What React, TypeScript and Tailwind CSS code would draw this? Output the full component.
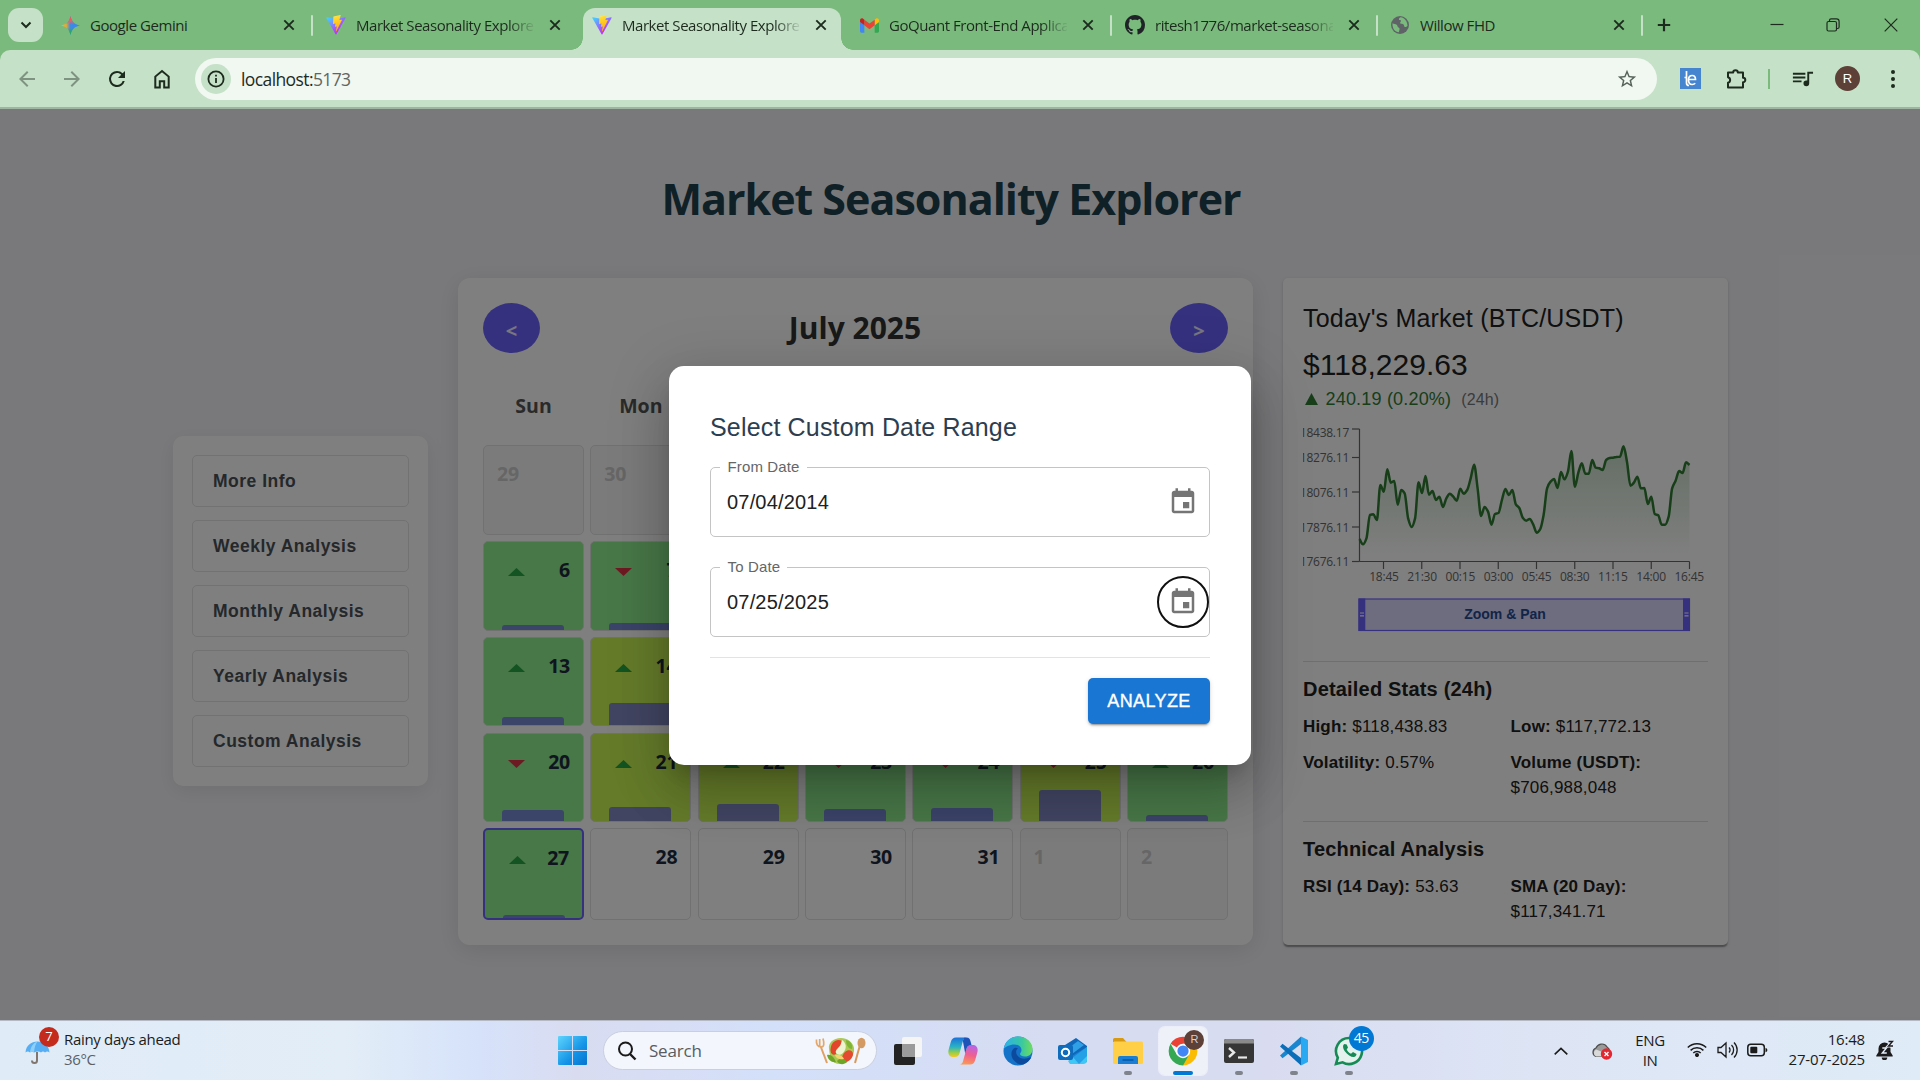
import React from "react";

const SEGOE = "font-['Open_Sans',sans-serif]";
const ARIAL = "font-['Liberation_Sans',Arial,sans-serif]";

/* ---------- small icons ---------- */

function ViteIcon() {
  return (
    <svg viewBox="0 0 32 32" className="h-5 w-5 shrink-0">
      <defs>
        <linearGradient id="va" x1="0" y1="0.1" x2="0.6" y2="0.8">
          <stop offset="0" stopColor="#41d1ff" />
          <stop offset="1" stopColor="#bd34fe" />
        </linearGradient>
        <linearGradient id="vb" x1="0.4" y1="0" x2="0.6" y2="1">
          <stop offset="0" stopColor="#ffea83" />
          <stop offset="0.1" stopColor="#ffdd35" />
          <stop offset="1" stopColor="#ffa800" />
        </linearGradient>
      </defs>
      <path d="M31.3 4.8 16.7 30.9a.8.8 0 0 1-1.4 0L.5 4.8a.8.8 0 0 1 .9-1.2l14.6 2.6 14.5-2.6a.8.8 0 0 1 .8 1.2z" fill="url(#va)" />
      <path d="M23 .1 12.200 2.2a.4.4 0 0 0-.3.4l-.7 11.200a.4.4 0 0 0 .5.4l3-.7a.4.4 0 0 1 .5.5l-.9 4.400a.4.4 0 0 0 .5.5l1.900-.6a.4.4 0 0 1 .5.5l-1.400 6.900c-.1.400.5.700.7.300l.2-.2 8.800-17.600a.4.4 0 0 0-.4-.6l-3.100.6a.4.4 0 0 1-.5-.5L23.500.600A.4.4 0 0 0 23 .1z" fill="url(#vb)" />
    </svg>
  );
}

const SPARK = "M10 0c.9 5.500 4.200 9 10 10-5.800 1-9.100 4.500-10 10-.9-5.500-4.200-9-10-10 5.800-1 9.100-4.500 10-10z";

function GeminiIcon() {
  return (
    <svg viewBox="0 0 20 20" className="h-[19px] w-[19px] shrink-0">
      <defs>
        <linearGradient id="ga" x1="0" y1="0.5" x2="1" y2="0.5">
          <stop offset="0" stopColor="#f7b81d" />
          <stop offset="0.28" stopColor="#e3a83a" />
          <stop offset="0.48" stopColor="#3f8be0" />
          <stop offset="1" stopColor="#3186ff" />
        </linearGradient>
        <linearGradient id="gb" x1="0.5" y1="0" x2="0.5" y2="1">
          <stop offset="0" stopColor="#ef4e5e" />
          <stop offset="0.25" stopColor="#e8606a" />
          <stop offset="0.45" stopColor="#e8606a" stopOpacity="0" />
          <stop offset="0.62" stopColor="#2aa765" stopOpacity="0" />
          <stop offset="0.85" stopColor="#2aa765" />
          <stop offset="1" stopColor="#2aa765" />
        </linearGradient>
      </defs>
      <path d={SPARK} fill="url(#ga)" />
      <path d={SPARK} fill="url(#gb)" />
    </svg>
  );
}

function GmailIcon() {
  return (
    <svg viewBox="52 42 88 66" className="h-[15px] w-[19px] shrink-0">
      <path fill="#4285f4" d="M58 108h14V74L52 59v43c0 3.320 2.690 6 6 6" />
      <path fill="#34a853" d="M120 108h14c3.320 0 6-2.690 6-6V59l-20 15" />
      <path fill="#fbbc04" d="M120 48v26l20-15v-8c0-7.420-8.470-11.650-14.400-7.200" />
      <path fill="#ea4335" d="M72 74V48l24 18 24-18v26L96 92" />
      <path fill="#c5221f" d="M52 51v8l20 15V48l-5.600-4.200c-5.940-4.450-14.400-.22-14.400 7.200" />
    </svg>
  );
}

function GithubIcon() {
  return (
    <svg viewBox="0 0 16 16" className="h-5 w-5 shrink-0" fill="#1f2328">
      <path d="M8 0C3.580 0 0 3.580 0 8c0 3.540 2.290 6.530 5.470 7.590.4.07.55-.17.55-.38 0-.19-.01-.82-.01-1.490-2.010.37-2.530-.49-2.690-.94-.09-.23-.48-.94-.82-1.130-.28-.15-.68-.52-.01-.53.63-.01 1.080.58 1.230.82.72 1.210 1.870.87 2.330.66.07-.52.28-.87.51-1.070-1.780-.2-3.640-.89-3.640-3.950 0-.87.31-1.590.82-2.150-.08-.2-.36-1.020.08-2.120 0 0 .67-.21 2.200.82.64-.18 1.320-.27 2-.27s1.360.09 2 .27c1.530-1.040 2.200-.82 2.200-.82.44 1.100.16 1.920.08 2.120.51.56.82 1.270.82 2.150 0 3.070-1.870 3.750-3.650 3.950.29.25.54.73.54 1.480 0 1.070-.01 1.930-.01 2.200 0 .21.15.46.55.38A8.010 8.010 0 0 0 16 8c0-4.420-3.580-8-8-8z" />
    </svg>
  );
}

function GlobeIcon() {
  return (
    <svg viewBox="0 0 20 20" className="h-5 w-5 shrink-0">
      <circle cx="10" cy="10" r="9" fill="#5f6368" />
      <path d="M2.500 8.200c1.500.8 3 .6 4.200 1.600 1 .8.600 2.200 1.800 2.700 1.200.4 1.200 1.600.9 2.600-.2.900-.6 1.600-.3 2.200C5 17 2.200 13.500 2.500 8.200zM10.500 2.200c-1 .8-1.800 1.400-1.500 2.300.3.800 1.800.3 2 1.300.2.900-1.300 1.400-.8 2.400.6 1.100 2.600.3 3.400 1.300.8 1 .3 2 1.200 2.400.9.400 1.900-.3 2.700-1.200C17.300 6 14.500 2.600 10.500 2.200z" fill="#7aba7d" />
    </svg>
  );
}

function CloseX() {
  return (
    <svg viewBox="0 0 12 12" className="h-3 w-3 shrink-0" stroke="#1d2b1e" strokeWidth="1.900" fill="none">
      <path d="M1.300 1.300 10.700 10.700M10.700 1.300 1.300 10.700" />
    </svg>
  );
}

/* ---------- browser chrome ---------- */

function Tab({ icon, title, fade = false, active = false, pad }: { icon: React.ReactNode; title: string; fade?: boolean; active?: boolean; pad: string }) {
  return (
    <div className={`relative flex shrink-0 items-center ${pad} ${active ? "mt-2 h-[42px] rounded-t-[12px] bg-[#c5e1c7] pb-2" : "h-[50px]"}`}>
      {active && (
        <>
          <span className="absolute bottom-0 -left-3 h-3 w-3 bg-[radial-gradient(circle_at_0_0,transparent_11.500px,#c5e1c7_12px)]" />
          <span className="absolute -right-3 bottom-0 h-3 w-3 bg-[radial-gradient(circle_at_100%_0,transparent_11.500px,#c5e1c7_12px)]" />
        </>
      )}
      <span className="flex w-5 justify-center">{icon}</span>
      <span
        className={`ml-[10px] w-[178px] overflow-hidden text-[15px] leading-5 tracking-[-0.45px] whitespace-nowrap text-[#1d2b1e] ${fade ? "[mask-image:linear-gradient(to_right,#000_152px,transparent_180px)]" : ""}`}
      >
        {title}
      </span>
      <span className="ml-[15px]">
        <CloseX />
      </span>
    </div>
  );
}

function Sep() {
  return <span className="h-[21px] w-[2px] shrink-0 rounded bg-[#c5e1c7]" />;
}

function BrowserChrome() {
  return (
    <header className={`${SEGOE} h-[109px] bg-[#7aba7d]`}>
      <div className="flex h-[50px] items-center">
        <button className="ml-2 flex h-[34px] w-[35px] shrink-0 items-center justify-center rounded-[11px] bg-[#c5e1c7]">
          <svg viewBox="0 0 12 8" className="h-2 w-3" fill="none" stroke="#1d2b1e" strokeWidth="2">
            <path d="M1.500 1.500 6 6l4.500-4.500" />
          </svg>
        </button>
        <Tab icon={<GeminiIcon />} title="Google Gemini" pad="ml-[17px] w-[251px]" />
        <Sep />
        <Tab icon={<ViteIcon />} title="Market Seasonality Explorer" fade pad="pl-[13px] w-[270px]" />
        <Tab icon={<ViteIcon />} title="Market Seasonality Explorer" fade active pad="pl-[9px] w-[258px]" />
        <Tab icon={<GmailIcon />} title="GoQuant Front-End Application" fade pad="pl-[18px] w-[269px]" />
        <Sep />
        <Tab icon={<GithubIcon />} title="ritesh1776/market-seasonality" fade pad="pl-[13px] w-[264px]" />
        <Sep />
        <Tab icon={<GlobeIcon />} title="Willow FHD" pad="pl-[12px] w-[263px]" />
        <Sep />
        <svg viewBox="0 0 14 14" className="ml-[14px] h-[14px] w-[14px]" stroke="#1d2b1e" strokeWidth="2.200">
          <path d="M7 .8v12.400M.8 7h12.400" />
        </svg>
        <div className="ml-auto flex items-center pr-[22px]">
          <svg viewBox="0 0 14 14" className="mr-[42px] h-[14px] w-[14px]" stroke="#1d2b1e" strokeWidth="1.200">
            <path d="M.5 6.500h13" />
          </svg>
          <svg viewBox="0 0 14 14" className="mr-[44px] h-[14px] w-[14px]" stroke="#1d2b1e" strokeWidth="1.200" fill="none">
            <rect x="1" y="3.500" width="9.500" height="9.500" rx="1.500" />
            <path d="M3.500 3V2.200A1.500 1.500 0 0 1 5 .9h5.500A2.600 2.600 0 0 1 13.100 3.500V9a1.500 1.500 0 0 1-1.500 1.500H11" />
          </svg>
          <svg viewBox="0 0 14 14" className="h-[14px] w-[14px]" stroke="#1d2b1e" strokeWidth="1.200">
            <path d="M.7.7l12.600 12.600M13.300.7.7 13.300" />
          </svg>
        </div>
      </div>
      <div className="flex h-[59px] items-center rounded-t-[10px] border-b-2 border-[#9fb4a1] bg-[#c5e1c7]">
        <svg viewBox="0 0 24 24" className="ml-[15px] h-6 w-6" fill="#7f9381">
          <path d="M20 11H7.830l5.590-5.590L12 4l-8 8 8 8 1.410-1.410L7.830 13H20z" />
        </svg>
        <svg viewBox="0 0 24 24" className="ml-[21px] h-6 w-6" fill="#7f9381">
          <path d="m12 4-1.410 1.410L16.170 11H4v2h12.170l-5.580 5.590L12 20l8-8z" />
        </svg>
        <svg viewBox="0 0 24 24" className="ml-[21px] h-6 w-6" fill="#1d2b1e">
          <path d="M17.650 6.350A7.960 7.960 0 0 0 12 4a8 8 0 1 0 7.730 10h-2.080A6 6 0 1 1 12 6c1.660 0 3.140.69 4.220 1.780L13 11h7V4z" />
        </svg>
        <svg viewBox="0 0 24 24" className="ml-[21px] h-6 w-6" fill="none" stroke="#1d2b1e" strokeWidth="2">
          <path d="M5.300 20.500V9.600L12 4l6.700 5.600v10.900h-4.500v-6.300H9.800v6.300z" />
        </svg>
        <div className="ml-[21px] flex h-[42px] w-[1462px] items-center rounded-full bg-[#f1f7f1]">
          <span className="ml-[6px] flex h-[30px] w-[30px] items-center justify-center rounded-full bg-[#c5e1c7]">
            <svg viewBox="0 0 18 18" className="h-[18px] w-[18px]" fill="none" stroke="#1d2b1e" strokeWidth="1.800">
              <circle cx="9" cy="9" r="7.600" />
              <path d="M9 8v5M9 4.800v1.800" />
            </svg>
          </span>
          <span className="mt-px ml-[10px] text-[17.500px] leading-6 tracking-[-0.6px] text-[#1d2b1e]">
            localhost:<span className="text-[#5f6660]">5173</span>
          </span>
          <svg viewBox="0 0 24 24" className="mr-[19px] ml-auto h-[22px] w-[22px]" fill="#56635a">
            <path d="m22 9.240-7.190-.62L12 2 9.190 8.630 2 9.240l5.460 4.730L5.820 21 12 17.270 18.180 21l-1.630-7.030zM12 15.400l-3.760 2.270 1-4.280-3.320-2.880 4.380-.38L12 6.100l1.710 4.040 4.380.38-3.320 2.880 1 4.280z" />
          </svg>
        </div>
        <svg viewBox="0 0 21 21" className="ml-[23px] h-[21px] w-[21px]">
          <rect width="21" height="21" fill="#4584cf" />
          <path d="M6.500 3v12a2.500 2.500 0 0 0 2.500 2.500M6.500 9.500h-2M8.500 11.500h7c0-3-1.500-4-3.300-4-2.200 0-3.700 1.700-3.700 4.500s1.500 4.500 3.700 4.500c1.300 0 2.300-.4 3-1.200" stroke="#fff" strokeWidth="1.700" fill="none" />
        </svg>
        <svg viewBox="0 0 24 24" className="ml-[23px] h-6 w-6" fill="none" stroke="#1d2b1e" strokeWidth="2">
          <path d="M4 5.500h5.200a2.300 2.300 0 0 1 4.600 0H19v5.200a2.300 2.300 0 0 1 0 4.600v5.200H4v-4.700a2.900 2.900 0 0 0 0-5.600z" strokeLinejoin="round" />
        </svg>
        <span className="ml-[20px] h-5 w-[2px] bg-[#7aba7d]" />
        <svg viewBox="0 0 24 24" className="ml-[21px] h-[23px] w-[23px]" fill="#1d2b1e">
          <path d="M15 6H2v2h13zm0 4H2v2h13zM2 16h9v-2H2zM17 5v9.180c-.31-.11-.65-.18-1-.18a3 3 0 1 0 3 3V7h4V5z" />
        </svg>
        <span className={`${ARIAL} ml-[21px] flex h-[25px] w-[25px] items-center justify-center rounded-full bg-[#5d4037] text-[13px] text-white`}>R</span>
        <svg viewBox="0 0 6 20" className="ml-[30px] h-5 w-[6px]" fill="#1d2b1e">
          <circle cx="3" cy="3" r="2" />
          <circle cx="3" cy="10" r="2" />
          <circle cx="3" cy="17" r="2" />
        </svg>
      </div>
    </header>
  );
}

/* ---------- analysis sidebar ---------- */

function Sidebar() {
  const items = ["More Info", "Weekly Analysis", "Monthly Analysis", "Yearly Analysis", "Custom Analysis"];
  return (
    <aside className={`${ARIAL} mb-[2px] flex h-[350px] w-[255px] flex-col gap-[13px] rounded-[10px] bg-white px-[19px] pt-[19px] shadow-[0_5px_19px_rgba(0,0,0,0.08)]`}>
      {items.map((t) => (
        <button key={t} className="h-[52px] rounded-[5px] border border-[#e4e4e4] pl-5 text-left text-[17.500px] leading-[22px] font-bold tracking-[0.5px] text-[#4a5056]">
          {t}
        </button>
      ))}
    </aside>
  );
}

/* ---------- calendar ---------- */

type Day = { n: number; off?: boolean; dir?: "up" | "down"; tone?: "g" | "l"; bar?: number; today?: boolean };

const up = (n: number, tone: "g" | "l", bar: number, today = false): Day => ({ n, dir: "up", tone, bar, today });
const down = (n: number, tone: "g" | "l", bar: number): Day => ({ n, dir: "down", tone, bar });

const DAYS: Day[] = [
  { n: 29, off: true }, { n: 30, off: true }, up(1, "g", 9), up(2, "g", 12), up(3, "g", 10), down(4, "g", 8), up(5, "g", 5),
  up(6, "g", 5), down(7, "g", 7), up(8, "g", 8), up(9, "l", 14), up(10, "l", 20), up(11, "l", 24), down(12, "g", 8),
  up(13, "g", 8), up(14, "l", 22), down(15, "l", 20), up(16, "l", 16), up(17, "g", 14), down(18, "l", 18), down(19, "g", 7),
  down(20, "g", 11), up(21, "l", 14), up(22, "l", 17), down(23, "g", 12), down(24, "g", 13), down(25, "l", 31), up(26, "g", 6),
  up(27, "g", 3, true), { n: 28 }, { n: 29 }, { n: 30 }, { n: 31 }, { n: 1, off: true }, { n: 2, off: true },
];

function DayCell({ d }: { d: Day }) {
  const bg = d.tone === "g" ? "bg-[#90ee90]" : d.tone === "l" ? "bg-[#cbf755]" : d.off ? "bg-[#f7f7f7]" : "bg-white";
  const border = d.today ? "border-2 border-[#6c63ff]" : "border border-[#e2e2e2]";
  return (
    <div className={`relative flex items-start overflow-hidden rounded-[5px] px-[13px] pt-[14px] text-[19.500px] leading-[28px] font-bold tracking-[-0.2px] ${bg} ${border} ${d.off ? "text-[#cccccc]" : "justify-between text-[#1d2b3c]"}`}>
      {!d.off && (
        <svg viewBox="0 0 17 8" className={`mt-[12px] ml-[11px] h-2 w-[17px] ${d.dir ? "" : "invisible"}`} fill={d.dir === "down" ? "#dc3545" : "#28a745"}>
          <path d={d.dir === "down" ? "M0 0h17L8.500 8z" : "M0 8h17L8.500 0z"} />
        </svg>
      )}
      <span>{d.n}</span>
      {d.bar && <span className="absolute bottom-0 left-[18px] w-[62px] rounded-t-[3px] bg-[#6f6be4]/78" style={{ height: d.bar }} />}
    </div>
  );
}

function Calendar() {
  const names = ["Sun", "Mon", "Tue", "Wed", "Thu", "Fri", "Sat"];
  return (
    <section className={`${SEGOE} h-[667px] w-[795px] rounded-[12px] bg-white p-[25px] shadow-[0_5px_25px_rgba(0,0,0,0.1)]`}>
      <div className="flex h-[50px] items-center justify-between">
        <button className="h-[50px] w-[57px] rounded-[50%] bg-[#6c63ff] pt-[5px] text-[20px] leading-6 font-bold text-white/90">&lt;</button>
        <h2 className="text-[30px] leading-10 font-bold text-[#333333]">July 2025</h2>
        <button className="h-[50px] w-[58px] rounded-[50%] bg-[#6c63ff] pt-[5px] text-[20px] leading-6 font-bold text-white/90">&gt;</button>
      </div>
      <div className="mt-[37px] grid grid-cols-7 gap-x-[6.250px] text-center text-[19.500px] leading-[32px] font-bold text-[#555555]">
        {names.map((n) => (
          <span key={n}>{n}</span>
        ))}
      </div>
      <div className="mt-[22.750px] grid grid-cols-7 grid-rows-[90px_89.500px_89.500px_89.500px_92px] gap-[6.250px]">
        {DAYS.map((d, i) => (
          <DayCell key={i} d={d} />
        ))}
      </div>
    </section>
  );
}

/* ---------- price chart ---------- */

const SERIES = [
  807, 823, 805, 735, 733, 750, 645, 665, 598, 638, 633, 704, 660, 670, 745, 771, 745, 637, 669, 618, 674, 663, 690, 680, 711, 685, 671, 680, 692, 656, 671,
  660, 625, 584, 655, 738, 711, 725, 764, 732, 729, 690, 657, 675, 660, 703, 714, 743, 752, 747, 763, 788, 778, 735, 655, 635, 627, 654, 606, 628, 605, 543,
  650, 608, 580, 611, 611, 570, 593, 595, 600, 570, 564, 563, 561, 560, 529, 575, 647, 638, 620, 655, 654, 702, 680, 732, 736, 764, 764, 740, 655, 632, 603,
  609, 577, 585,
];

const X0 = 56.500;
const X1 = 386.500;

function monotonePath(ys: number[]): string {
  const n = ys.length;
  const dx = (X1 - X0) / (n - 1);
  const s = ys.slice(1).map((y, i) => (y - ys[i]) / dx);
  const m = ys.map((_, i) => {
    if (i === 0) return s[0];
    if (i === n - 1) return s[n - 2];
    if (s[i - 1] * s[i] <= 0) return 0;
    return (2 * s[i - 1] * s[i]) / (s[i - 1] + s[i]);
  });
  let d = `M${X0} ${ys[0].toFixed(2)}`;
  for (let i = 1; i < n; i++) {
    const xa = X0 + (i - 1) * dx;
    const xb = X0 + i * dx;
    d += `C${(xa + dx / 3).toFixed(2)} ${(ys[i - 1] + (m[i - 1] * dx) / 3).toFixed(2)} ${(xb - dx / 3).toFixed(2)} ${(ys[i] - (m[i] * dx) / 3).toFixed(2)} ${xb.toFixed(2)} ${ys[i].toFixed(2)}`;
  }
  return d;
}

function PriceChart() {
  const line = monotonePath(SERIES.map((v) => v / 3 - 142));
  const yTicks: [number, string, number][] = [
    [17, "118438.17", 25], [45.500, "118276.11", 50], [80, "118076.11", 84.500], [115, "117876.11", 119.500], [149.500, "117676.11", 154],
  ];
  const xTicks = ["18:45", "21:30", "00:15", "03:00", "05:45", "08:30", "11:15", "14:00", "16:45"];
  return (
    <svg viewBox="0 0 405 249" className="block h-[249px] w-[405px]">
      <defs>
        <linearGradient id="fill" gradientUnits="userSpaceOnUse" x1="0" y1="34" x2="0" y2="145">
          <stop offset="0" stopColor="#2e7d32" stopOpacity="0.26" />
          <stop offset="1" stopColor="#2e7d32" stopOpacity="0" />
        </linearGradient>
      </defs>
      <path d={`${line}L${X1} 149.500L${X0} 149.500Z`} fill="url(#fill)" />
      <g stroke="#666666" strokeWidth="1.200">
        <path d={`M${X0} 17V149.500M${X0} 149.500H${X1}`} />
        {yTicks.map(([y]) => (
          <path key={y} d={`M49 ${y}H${X0}`} />
        ))}
        {xTicks.map((t, i) => (
          <path key={t} d={`M${80.500 + i * 38.250} 149.500v7.500`} />
        ))}
      </g>
      <g className="font-['Open_Sans',sans-serif] text-[12px]" fill="#666666">
        {yTicks.map(([y, t, b]) => (
          <text key={y} x="46" y={b} textAnchor="end" letterSpacing="-0.250">
            {t}
          </text>
        ))}
        {xTicks.map((t, i) => (
          <text key={t} x={81 + i * 38.150} y="169" textAnchor="middle" letterSpacing="-0.200">
            {t}
          </text>
        ))}
      </g>
      <path d={line} fill="none" stroke="#2e7d32" strokeWidth="2.500" strokeLinejoin="round" />
      <rect x="56" y="187" width="330.500" height="31.500" fill="#dcd9ff" stroke="#6c63ff" strokeWidth="1.200" />
      {[55.500, 380].map((x) => (
        <g key={x}>
          <rect x={x} y="186.500" width="6.800" height="32.500" fill="#6c63ff" />
          <path d={`M${x + 1.500} 201h4M${x + 1.500} 203.800h4`} stroke="#fff" strokeWidth="1.200" />
        </g>
      ))}
      <text x="202" y="207" textAnchor="middle" fill="#254a8f" className="font-['Liberation_Sans',Arial,sans-serif] text-[14px] font-bold">
        Zoom &amp; Pan
      </text>
    </svg>
  );
}

/* ---------- market panel ---------- */

function Stat({ label, value, wrap = false }: { label: string; value: string; wrap?: boolean }) {
  return (
    <p>
      <b>{label}</b> {wrap && <br />}
      {value}
    </p>
  );
}

function MarketPanel() {
  return (
    <section
      className={`${ARIAL} flex h-[667px] w-[445px] flex-col rounded-[5px] bg-white px-5 pt-5 text-[#212121] shadow-[0px_2.500px_1.250px_-1.250px_rgba(0,0,0,0.2),0px_1.250px_1.250px_0px_rgba(0,0,0,0.14),0px_1.250px_4px_0px_rgba(0,0,0,0.12)]`}
    >
      <h2 className="text-[25px] leading-10 tracking-[0.19px]">Today's Market (BTC/USDT)</h2>
      <p className="mt-[8px] text-[30px] leading-[38px]">$118,229.63</p>
      <p className="mt-px flex h-[27px] items-baseline text-[18px] leading-[28px] tracking-[0.19px] text-[#2e7d32]">
        <svg viewBox="0 0 13 12" className="mr-[7.500px] ml-[2px] h-3 w-[13px]" fill="#2e7d32">
          <path d="M0 12h13L6.500 0z" />
        </svg>
        240.19 (0.20%)
        <span className="ml-[10px] text-[16px] tracking-[0.1px] text-[#74777c]">(24h)</span>
      </p>
      <PriceChart />
      <hr className="border-[#dedede]" />
      <h3 className="mt-[10px] text-[20px] leading-[35px] font-bold tracking-[0.19px]">Detailed Stats (24h)</h3>
      <div className="mt-[7px] grid grid-cols-2 gap-x-[10px] gap-y-[11px] text-[17px] leading-[25px] tracking-[0.18px]">
        <Stat label="High:" value="$118,438.83" />
        <Stat label="Low:" value="$117,772.13" />
        <Stat label="Volatility:" value="0.57%" />
        <Stat label="Volume (USDT):" value="$706,988,048" wrap />
      </div>
      <hr className="mt-[21px] border-[#dedede]" />
      <h3 className="mt-[10px] text-[20px] leading-[35px] font-bold tracking-[0.19px]">Technical Analysis</h3>
      <div className="mt-[7px] grid grid-cols-2 gap-x-[10px] text-[17px] leading-[25px] tracking-[0.18px]">
        <Stat label="RSI (14 Day):" value="53.63" />
        <Stat label="SMA (20 Day):" value="$117,341.71" wrap />
      </div>
    </section>
  );
}

/* ---------- modal ---------- */

function DateField({ label, value, gap, focused = false }: { label: string; value: string; gap: string; focused?: boolean }) {
  return (
    <div className="relative flex h-[70px] items-center rounded-[5px] border border-[#c4c4c4] pl-[16px]">
      <span className={`absolute -top-[11px] left-[9px] h-5 bg-white pl-[7.500px] text-[15px] leading-[19px] tracking-[0.14px] text-[#666666] ${gap}`}>{label}</span>
      <span className="text-[20px] leading-[30px] tracking-[0.19px] text-[#212121]">{value}</span>
      <span className={`ml-auto flex h-[52px] w-[52px] items-center justify-center rounded-full ${focused ? "border-2 border-[#101010]" : ""}`}>
        <svg viewBox="0 0 24 24" className="h-[30px] w-[30px]" fill="#757575">
          <path d="M17 12h-5v5h5zM16 1v2H8V1H6v2H5c-1.110 0-1.990.9-1.990 2L3 19c0 1.100.89 2 2 2h14c1.100 0 2-.9 2-2V5c0-1.100-.9-2-2-2h-1V1zm3 18H5V8h14z" />
        </svg>
      </span>
    </div>
  );
}

function Modal() {
  return (
    <div className="absolute inset-0 bg-black/50">
      <div
        className={`${ARIAL} mt-[257px] ml-[669px] flex h-[399px] w-[582px] flex-col rounded-[15px] bg-white px-[41px] pt-[41px] shadow-[0px_14px_19px_-9px_rgba(0,0,0,0.2),0px_30px_48px_4px_rgba(0,0,0,0.14),0px_11px_58px_10px_rgba(0,0,0,0.12)]`}
      >
        <h2 className="text-[25px] leading-10 tracking-[0.17px] text-[#2c3e50]">Select Custom Date Range</h2>
        <div className="mt-[20px] flex flex-col gap-[30px]">
          <DateField label="From Date" value="07/04/2014" gap="w-[87px]" />
          <DateField label="To Date" value="07/25/2025" gap="w-[67px]" focused />
        </div>
        <hr className="mt-[20px] border-[#e3e3e3]" />
        <button className="mt-[20px] h-[46px] w-[122px] self-end rounded-[5px] bg-[#1976d2] text-[18px] tracking-[0.4px] text-white shadow-[0px_3px_1px_-2px_rgba(0,0,0,0.2),0px_2px_2px_0px_rgba(0,0,0,0.14),0px_1px_5px_0px_rgba(0,0,0,0.12)] [-webkit-text-stroke:0.35px_#fff]">
          ANALYZE
        </button>
      </div>
    </div>
  );
}

/* ---------- taskbar ---------- */

function Slot({ children, run, active = false }: { children: React.ReactNode; run?: boolean; active?: boolean }) {
  return (
    <div className={`relative flex h-12 w-12 items-center justify-center rounded-md ${active ? "bg-white/60 shadow-[0_0_0_1px_rgba(255,255,255,0.5)]" : ""}`}>
      {children}
      {run && <span className={`absolute bottom-0 h-1 rounded-full ${active ? "w-5 bg-[#0078d4]" : "w-2 bg-[#7f838c]"}`} />}
    </div>
  );
}

function Taskbar() {
  return (
    <footer
      className={`${SEGOE} flex h-[60px] items-center border-t border-[#b4b9c4] bg-[linear-gradient(90deg,#dfebf7_0%,#e2edf7_18%,#d6e2fa_25%,#d9dcf1_30%,#d3e0f9_40%,#d6dcf2_55%,#d9dcf0_66%,#dde5f5_80%,#dfebf7_100%)]`}
    >
      <div className="ml-[25px] flex w-[533px] items-center">
        <div className="relative h-12 w-10">
          <svg viewBox="0 0 26 25" className="absolute top-[13px] left-0 h-[25px] w-[26px]">
            <path d="M12 12v8.500a2.500 2.500 0 0 1-5 0" fill="none" stroke="#80756f" strokeWidth="2" />
            <path d="M.5 12.500C1 5.500 6 1.500 12.500 1.500S24 5.500 24.500 12.500c-1.500-1.500-3-1.500-4.500 0-1.300-1.500-2.700-1.500-4 0-1.500-1.500-4.500-1.500-7 0-1.300-1.500-2.700-1.500-4 0-1.500-1.300-3-1.300-4.500 0z" fill="#57aef2" />
            <path d="M9 12.500c.5-5 1.500-8.500 3.500-11C8 3 5.500 7 5 12.500c1.300-1.500 2.700-1.500 4 0z" fill="#8fd0fb" />
          </svg>
          <span className="absolute top-0 left-[14px] flex h-5 w-5 items-center justify-center rounded-full bg-[#c42b1c] text-[13px] leading-none text-white">7</span>
        </div>
        <div className="-mt-[3px] -ml-[1px] text-[15px] leading-5 tracking-[-0.32px]">
          <p className="text-[#1b1b1b]">Rainy days ahead</p>
          <p className="text-[#5c5f66]">36°C</p>
        </div>
      </div>
      <svg viewBox="0 0 29 29" className="h-[29px] w-[29px] shrink-0">
        <defs>
          <linearGradient id="win" x1="0" y1="0" x2="29" y2="29" gradientUnits="userSpaceOnUse">
            <stop offset="0" stopColor="#5fd4fd" />
            <stop offset="0.6" stopColor="#1493e6" />
            <stop offset="1" stopColor="#0673d0" />
          </linearGradient>
        </defs>
        <path d="M1 0h13v14H0V1a1 1 0 0 1 1-1zM15 0h13a1 1 0 0 1 1 1v13H15zM0 15h14v14H1a1 1 0 0 1-1-1zM15 15h14v13a1 1 0 0 1-1 1H15z" fill="url(#win)" />
      </svg>
      <div className="ml-[16px] flex h-[39px] w-[274px] shrink-0 items-center rounded-full border border-[#c9cfdf] bg-[#f3f6fd]">
        <svg viewBox="0 0 20 20" className="ml-[13px] h-5 w-5" fill="none" stroke="#1b1b1b" strokeWidth="2">
          <circle cx="8.500" cy="8" r="6.500" />
          <path d="m13 13 5.500 5.500" strokeWidth="2.400" />
        </svg>
        <span className="ml-[12px] text-[17px] leading-6 tracking-[-0.2px] text-[#5a5c61]">Search</span>
        <svg viewBox="0 0 52 28" className="mr-[9px] ml-auto h-7 w-[52px]">
          <path d="M5.500 9 12 26" stroke="#dfa062" strokeWidth="2" />
          <path d="M1.500 2.500C1 7 2.500 10 5.800 10S9.500 7 8 1.500M4.700 2v7" stroke="#e3a76c" strokeWidth="1.700" fill="none" />
          <path d="M45 8 40 26" stroke="#d8995c" strokeWidth="2" />
          <ellipse cx="46.500" cy="6" rx="4" ry="5.200" fill="#d39a63" />
          <path d="M14 12c-1-6 4-11 12-11 6 0 12 4 13 10 1 7-5 16-14 16S15 20 14 12z" fill="#a9c957" />
          <path d="M17 7c3-5 9-5 11-2l-4 8c-2 4-5 6-7 4s-2-6 0-10z" fill="#e2452c" />
          <path d="M30 15c3-3 8-2 8 2s-5 9-9 8-2-7 1-10z" fill="#e5492f" />
          <path d="M12 18c4-1 7 2 9 7-4 1-8-2-9-7zM22 24c3-4 8-3 10 1-3 3-8 3-10-1z" fill="#6fa527" />
          <path d="M27 3c3 2 5 6 3 10s-5 6-8 4 0-5 2-7 2-4 3-7z" fill="#eef3d0" />
          <path d="M31 3c5 1 7 5 6 9-3 0-6-3-6-9z" fill="#7fb536" />
          <path d="M20 18c4-1 8 1 9 4-4 1-8 0-9-4z" fill="#f4d56e" />
        </svg>
      </div>
      <div className="ml-[7px] flex shrink-0 items-center gap-[7.100px]">
        <Slot>
          <svg viewBox="0 0 30 30" className="h-[30px] w-[30px]">
            <rect x="1" y="8" width="21" height="21" rx="2" fill="#232323" />
            <rect x="9" y="1" width="20" height="20" rx="2" fill="#f5f5f5" />
            <path d="M9 8h13v13H11a2 2 0 0 1-2-2z" fill="#9b9b9b" />
          </svg>
        </Slot>
        <Slot>
          <svg viewBox="0 0 30 30" className="h-[30px] w-[30px]">
            <defs>
              <linearGradient id="c1" x1="0" y1="0" x2="0" y2="1">
                <stop offset="0" stopColor="#1c70d8" />
                <stop offset="0.5" stopColor="#2bb5c4" />
                <stop offset="0.8" stopColor="#a3cf3b" />
                <stop offset="1" stopColor="#f7c928" />
              </linearGradient>
              <linearGradient id="c2" x1="0.6" y1="0" x2="0.4" y2="1">
                <stop offset="0" stopColor="#b565e8" />
                <stop offset="0.5" stopColor="#ef5f8f" />
                <stop offset="1" stopColor="#fb9a50" />
              </linearGradient>
            </defs>
            <path d="M8 1.500h10.500c-2 0-3 1.200-3.600 3.500l-3.300 12c-.8 2.800-2 4-4.600 4H5.500C1 21-.5 17.500.8 13l2-7C3.700 3 5 1.500 8 1.500z" fill="url(#c1)" />
            <path d="M22 28.500H11.500c2 0 3-1.200 3.600-3.500l3.300-12c.8-2.800 2-4 4.600-4h1.500c4.500 0 6 3.500 4.700 8l-2 7c-.9 3-2.200 4.500-5.200 4.500z" fill="url(#c2)" />
            <path d="M17 1.500h1.500c2.500 0 3.400 1.500 4.100 4L23.500 9c-2.800 0-4.300 1-5.100 4l-1.200 4.500L14.900 5c.6-2.300 1.100-3.500 2.100-3.500z" fill="#1e53b8" />
          </svg>
        </Slot>
        <Slot>
          <svg viewBox="0 0 30 30" className="h-[30px] w-[30px]">
            <defs>
              <linearGradient id="e1" x1="0" y1="0.3" x2="1" y2="0.3">
                <stop offset="0" stopColor="#2fb1e8" />
                <stop offset="0.6" stopColor="#38c7a5" />
                <stop offset="1" stopColor="#6fdc5b" />
              </linearGradient>
            </defs>
            <circle cx="15" cy="15" r="14.500" fill="#1473c9" />
            <path d="M.7 13C2 5 8 .5 15 .5c8.500 0 14.500 6 14.500 12.500 0 5-3.500 7.500-7.500 7.500-3 0-5-1-5-2.500 0-1 1.500-1.800 1.500-4 0-3-3-5.500-7-5.500C6.500 8.500 2 11 .7 13z" fill="url(#e1)" />
            <path d="M11.500 12c-3.500 2-4.500 8-.5 12.500 2.500 3 6 4.500 9 4 4-1.500 6.500-4 8-6.500.3-.6-.3-1-.9-.7-5 2.500-11 1.500-13.100-2.300C12.500 16.500 13 13.500 15 12.500c-1-.9-2.300-1-3.500-.5z" fill="#0c4a9e" />
          </svg>
        </Slot>
        <Slot>
          <svg viewBox="0 0 30 30" className="h-[30px] w-[30px]">
            <path d="M7 9 18 2l11 8v14a3 3 0 0 1-3 3H12z" fill="#1066b8" />
            <path d="M12 11 20 5l6 4-12 9z" fill="#2f9fe6" />
            <path d="M29 11v13a4 4 0 0 1-4 4H12l-2-3z" fill="#3fc7f5" />
            <path d="M14 20 29 11v9l-8 8z" fill="#1b8fe0" opacity=".7" />
            <rect x="0" y="9" width="15" height="15" rx="2" fill="#0f6cbd" />
            <circle cx="7.500" cy="16.500" r="3.700" fill="none" stroke="#fff" strokeWidth="2" />
          </svg>
        </Slot>
        <Slot run>
          <svg viewBox="0 0 30 28" className="h-7 w-[30px]">
            <path d="M0 2.500A1.500 1.500 0 0 1 1.500 1H10l3.500 4H0z" fill="#d99a13" />
            <rect x="0" y="4.500" width="30" height="22.500" rx="1.500" fill="#ffcf48" />
            <path d="M5 27v-6a2 2 0 0 1 2-2h16a2 2 0 0 1 2 2v6z" fill="#1a7fd4" />
            <path d="M9.500 23h11" stroke="#0b5cab" strokeWidth="1.800" />
          </svg>
        </Slot>
        <Slot run active>
          <svg viewBox="0 0 48 48" className="h-[30px] w-[30px]">
            <path d="M24 24 4.100 12.500A23 23 0 0 1 43.900 12.500H24z" fill="#ea4335" />
            <path d="M24 24 43.900 12.500A23 23 0 0 1 24 47z" fill="#fbbc05" />
            <path d="M34 29.700 24 47A23 23 0 0 1 4.100 12.500L14 29.700z" fill="#34a853" />
            <circle cx="24" cy="24" r="11.500" fill="#fff" />
            <circle cx="24" cy="24" r="9" fill="#4285f4" />
          </svg>
          <span className={`${ARIAL} absolute top-[3px] right-[3px] flex h-5 w-5 items-center justify-center rounded-full bg-[#5d4037] text-[11px] text-[#d6cfcb]`}>R</span>
        </Slot>
        <Slot run>
          <svg viewBox="0 0 30 24" className="h-6 w-[30px]">
            <rect width="30" height="24" rx="2" fill="#363636" />
            <path d="M2 0h26a2 2 0 0 1 2 2v2.500H0V2a2 2 0 0 1 2-2z" fill="#8a8a8a" />
            <path d="m5 9 5 4.500L5 18" fill="none" stroke="#e8e8e8" strokeWidth="2.400" />
            <path d="M14 18.500h9" stroke="#e8e8e8" strokeWidth="2.200" />
          </svg>
        </Slot>
        <Slot run>
          <svg viewBox="0 0 30 30" className="h-[30px] w-[30px]">
            <path d="M22 .5 29 4v22l-7 3.500z" fill="#29a9f1" />
            <path d="M22 .5 1 19.500l2.500 2.800L22 8z" fill="#1a86d0" />
            <path d="M22 29.500 1 10.500l2.500-2.800L22 22z" fill="#0a6fb8" />
          </svg>
        </Slot>
        <Slot run>
          <svg viewBox="0 0 30 30" className="h-[30px] w-[30px]">
            <path d="M15 2A13 13 0 0 0 3.800 21.600L2 28l6.600-1.700A13 13 0 1 0 15 2z" fill="#e4f1ec" stroke="#168a55" strokeWidth="2.600" />
            <path d="M10.500 8c-2 1-2 4 .5 7.500s6 5.500 8.500 5.500c2 0 3-1.500 3-3l-3.500-2-2 1.700c-2-.8-3.500-2.400-4.300-4.200L14 11.500l-1.300-3z" fill="#168a55" />
          </svg>
          <span className="absolute -top-px right-[-1px] flex h-[25px] w-[25px] items-center justify-center rounded-full bg-[#0078d4] text-[14px] leading-none tracking-[-0.5px] text-white">45</span>
        </Slot>
      </div>
      <div className="ml-auto flex items-center pr-[26px] text-[#1b1b1b]">
        <svg viewBox="0 0 14 8" className="h-2 w-[14px]" fill="none" stroke="#1b1b1b" strokeWidth="1.600">
          <path d="m.7 7.300 6.300-6 6.300 6" />
        </svg>
        <svg viewBox="0 0 22 18" className="ml-[23px] h-[18px] w-[22px]">
          <path d="M5 14.500a4.500 4.500 0 0 1 0-8.500C6.500 2 13 0 16 5l2 2v7.500z" fill="#9a9a9a" stroke="#4f4f4f" strokeWidth="1.200" />
          <path d="M5 14.500a4 4 0 0 1 0-7l8 3v4z" fill="#d9d9d9" />
          <circle cx="15.500" cy="12" r="5.700" fill="#e3262f" />
          <path d="m13.500 10 4 4m0-4-4 4" stroke="#fff" strokeWidth="1.400" />
        </svg>
        <div className="-mt-[2px] ml-[18px] w-[38px] text-center text-[15px] leading-5 tracking-[-0.4px]">
          <p>ENG</p>
          <p>IN</p>
        </div>
        <svg viewBox="0 0 20 15" className="-mt-[2px] ml-[18px] h-[15px] w-5" fill="none" stroke="#1b1b1b" strokeWidth="1.500">
          <path d="M.8 5.500a13 13 0 0 1 18.400 0M3.600 8.400a9 9 0 0 1 12.800 0M6.300 11a5.200 5.200 0 0 1 7.400 0" />
          <circle cx="10" cy="13" r="1.300" fill="#1b1b1b" />
        </svg>
        <svg viewBox="0 0 21 18" className="-mt-px ml-[10px] h-[18px] w-[21px]" fill="none" stroke="#1b1b1b" strokeWidth="1.300">
          <path d="M1 6.500v5h3l5 4.500V2L4 6.500zM12 6.500a3.500 3.500 0 0 1 0 5M14.500 4a7 7 0 0 1 0 10M17 1.500a10.500 10.500 0 0 1 0 15" />
        </svg>
        <svg viewBox="0 0 21 14" className="-mt-px ml-[9px] h-[14px] w-[21px]">
          <rect x=".8" y="1.300" width="16.500" height="11.400" rx="3" fill="none" stroke="#1b1b1b" strokeWidth="1.500" />
          <rect x="3.300" y="3.700" width="7" height="6.600" rx="1" fill="#1b1b1b" />
          <path d="M18.500 5v4.200c1 0 1.800-.8 1.800-2.100S19.500 5 18.500 5z" fill="#1b1b1b" />
        </svg>
        <div className="-mt-[3px] ml-[18px] w-[79px] text-right text-[15px] leading-5 tracking-[-0.18px] whitespace-nowrap">
          <p>16:48</p>
          <p>27-07-2025</p>
        </div>
        <svg viewBox="0 0 18 20" className="-mt-px ml-[11px] h-5 w-[18px]">
          <path d="M8.500 2.500a6 6 0 0 0-6 6V12L.3 15.500v1h16.400v-1L14.500 12V8.500a6 6 0 0 0-6-6z" fill="#1b1b1b" />
          <path d="M5.700 17.500a2.800 2.800 0 0 0 5.600 0z" fill="#1b1b1b" />
          <path d="M6.300 8h4.200l-4.200 5h4.500" fill="none" stroke="#e6eef8" strokeWidth="1.400" />
          <path d="M12.200 1.500h4.300l-4 4.500h4.700" fill="none" stroke="#e6eef8" strokeWidth="3.200" />
          <path d="M12.500 1.500h4l-4 4.500h4.500" fill="none" stroke="#1b1b1b" strokeWidth="1.400" />
        </svg>
      </div>
    </footer>
  );
}

export default function App() {
  return (
    <div className="h-[1080px] w-[1920px] overflow-hidden">
      <BrowserChrome />
      <main className="relative h-[911px] overflow-hidden bg-[#f3f3f7]">
        <h1 className={`${SEGOE} w-[1902px] pt-[60px] text-center text-[43px] leading-[60px] font-bold tracking-[-1px] whitespace-nowrap text-[#1f404c]`}>
          Market Seasonality Explorer
        </h1>
        <div className="mt-[49px] ml-[173px] flex items-center gap-[30px]">
          <Sidebar />
          <Calendar />
          <MarketPanel />
        </div>
        <Modal />
      </main>
      <Taskbar />
    </div>
  );
}
